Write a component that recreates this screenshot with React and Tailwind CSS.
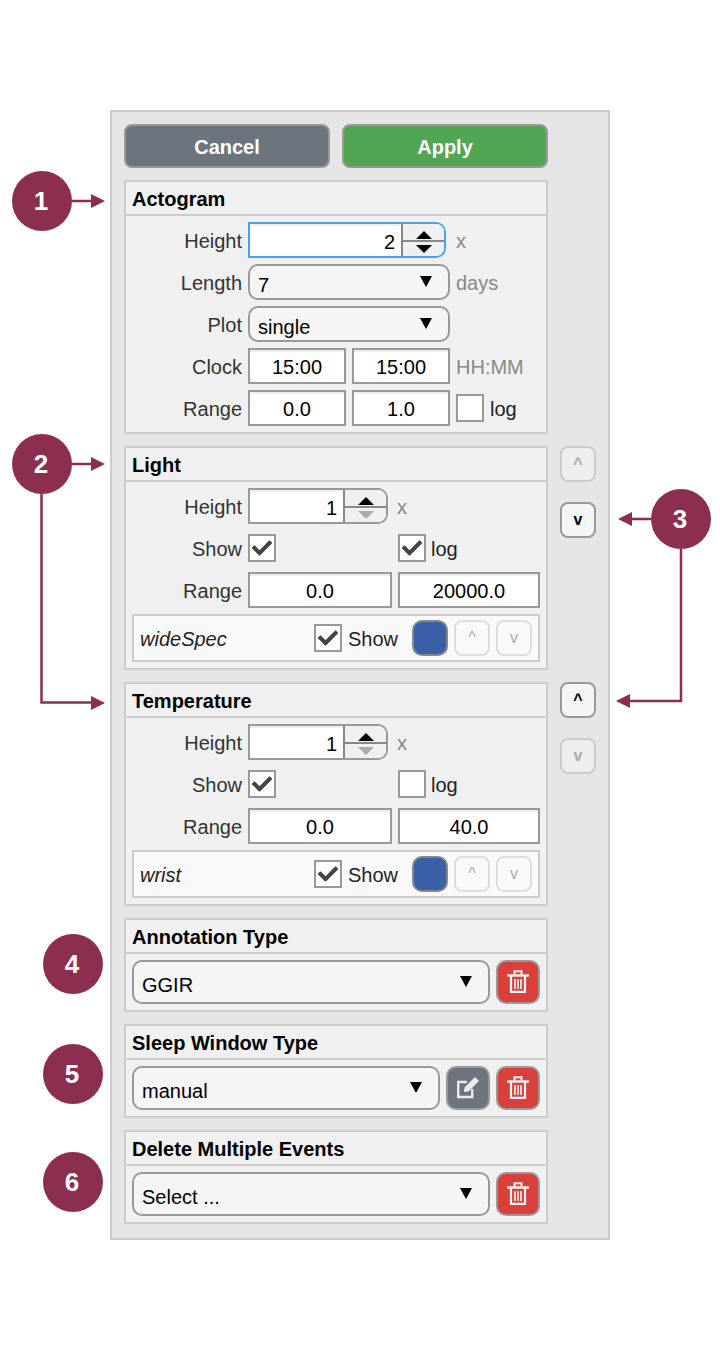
import React from 'react';
import { FaCheck } from 'react-icons/fa';

const Triangle = ({ dir = 'down', className = '' }) => (
  <svg width="12" height="11" viewBox="0 0 12 11" preserveAspectRatio="none" className={className} fill="currentColor">
    <path d={dir === 'down' ? 'M0 0H12L6 11Z' : 'M0 11H12L6 0Z'} />
  </svg>
);

const TrashIcon = () => (
  <svg width="24" height="24" viewBox="0 0 24 24" fill="none" stroke="#f6f6f6">
    <path d="M8.5 4.5V1.2H15.5V4.5" strokeWidth="2" />
    <path d="M1 5.5H23" strokeWidth="2.4" />
    <path d="M5 6V21.8H19V6" strokeWidth="2.2" />
    <path d="M9 9V19M12 9V19M15 9V19" strokeWidth="1.6" />
  </svg>
);

const EditIcon = () => (
  <svg width="24" height="24" viewBox="0 0 24 24" fill="none" stroke="#e8eaeb">
    <path d="M11 6H2.2V21H16.2V13" strokeWidth="2.4" />
    <path d="M8.5 11.5L8 16L12.5 15.5L23 5L19 1Z" fill="#e8eaeb" stroke="none" />
  </svg>
);

const Field = ({ value, className = '' }) => (
  <input
    readOnly
    value={value}
    className={`h-9 border-2 border-[#999] bg-white pt-[2px] text-center text-[20px] text-black outline-none shadow-[inset_0_2px_0_#f0f0f0] ${className}`}
  />
);

const Select = ({ value, className = '', tall = false }) => (
  <div className={`flex items-center justify-between rounded-[10px] border-2 border-[#999] bg-[#f5f5f5] pl-2 pr-[16px] ${tall ? 'h-11' : 'h-9'} ${className}`}>
    <span className="pt-1.5 text-[20px] text-black">{value}</span>
    <Triangle className="mb-[1px] text-black" />
  </div>
);

const Spinner = ({ value, focused = false, downDisabled = false, className = '' }) => (
  <div className={`flex h-9 rounded-r-[10px] border-2 ${focused ? 'border-[#4a9ff5]' : 'border-[#999]'} ${className}`}>
    <div className="flex-1 bg-white pr-1.5 pt-[3px] text-right text-[20px] text-black shadow-[inset_0_2px_0_#f0f0f0]">{value}</div>
    <div className="flex w-[43px] flex-col border-l-2 border-[#888] bg-[#f0f0f0] rounded-r-[8px]">
      <div className="flex flex-1 items-end justify-center border-b-2 border-[#888] pb-[1px]">
        <Triangle dir="up" className="h-[8px] w-[16px] text-black" />
      </div>
      <div className="flex flex-1 items-center justify-center">
        <Triangle className={`h-[8px] w-[16px] ${downDisabled ? 'text-[#aaa]' : 'text-black'}`} />
      </div>
    </div>
  </div>
);

const Checkbox = ({ checked = false }) => (
  <div className="flex h-7 w-7 shrink-0 items-center justify-center border-2 border-[#999] bg-white">
    {checked && <FaCheck className="text-[20px] text-[#444]" />}
  </div>
);

const Text = ({ className = '', children }) => (
  <span className={`pt-[2px] text-[20px] ${className}`}>{children}</span>
);

const Row = ({ label, children }) => (
  <div className="flex h-9 items-center gap-1.5">
    <div className="w-[110px] pt-[2px] text-right text-[20px] text-[#333]">{label}</div>
    {children}
  </div>
);

const Section = ({ title, children }) => (
  <div className="w-[424px] border-2 border-[#ccc] bg-[#f0f0f0]">
    <div className="flex h-[34px] items-center border-b-2 border-[#ccc] pl-1.5 pt-[2px] text-[20px] font-bold text-black">{title}</div>
    {children}
  </div>
);

const SideButton = ({ label, enabled }) => (
  <div className={`flex h-9 w-9 items-center justify-center rounded-[8px] border-2 text-[16px] font-bold ${enabled ? 'border-[#999] bg-[#f5f5f5] text-black' : 'border-[#ccc] bg-[#eee] text-[#aaa]'}`}>
    {label}
  </div>
);

const TrackButton = ({ label }) => (
  <div className="flex h-9 w-9 items-center justify-center rounded-[8px] border-2 border-[#ddd] bg-[#f9f9f9] text-[16px] text-[#aaa]">
    {label}
  </div>
);

const IconButton = ({ color, children }) => (
  <div className={`flex h-11 w-11 shrink-0 items-center justify-center rounded-[10px] border-2 border-[#999] ${color}`}>
    {children}
  </div>
);

const Delete = () => (
  <IconButton color="bg-[#da403b]"><TrashIcon /></IconButton>
);

const TrackRows = ({ height, logChecked, max, track }) => (
  <div className="flex flex-col gap-1.5 p-1.5">
    <Row label="Height">
      <Spinner value={height} downDisabled className="w-[140px]" />
      <Text className="ml-[3px] text-[#888]">x</Text>
    </Row>
    <Row label="Show">
      <div className="w-[144px]"><Checkbox checked /></div>
      <Checkbox checked={logChecked} />
      <Text className="-ml-px text-[#222]">log</Text>
    </Row>
    <Row label="Range">
      <Field value="0.0" className="w-[144px]" />
      <Field value={max} className="w-[142px]" />
    </Row>
    <div className="flex h-12 items-center border-2 border-[#ccc] bg-[#f9f9f9] pl-1.5 pr-1.5">
      <Text className="italic text-[#222]">{track}</Text>
      <div className="ml-auto"><Checkbox checked /></div>
      <Text className="ml-1.5 w-[64px] text-[#222]">Show</Text>
      <div className="h-9 w-9 rounded-[10px] border-2 border-[#888] bg-[#3a60a8]" />
      <div className="ml-1.5"><TrackButton label="^" /></div>
      <div className="ml-1.5"><TrackButton label="v" /></div>
    </div>
  </div>
);

const Callout = ({ n, className }) => (
  <div className={`absolute flex h-[60px] w-[60px] items-center justify-center rounded-full bg-[#8b2e50] pr-[2px] text-[26px] font-bold text-white ${className}`}>
    {n}
  </div>
);

// the numbered notes and their arrows lie over the panel
const Annotations = () => (
  <>
    <svg className="absolute left-0 top-0" width="720" height="1350" viewBox="0 0 720 1350" fill="none">
      <g stroke="#8b2e50" strokeWidth="2.5">
        <path d="M72 201H92" />
        <path d="M72 464H92" />
        <path d="M41.5 494V702.5H92" />
        <path d="M651 519H630" />
        <path d="M681 549V701H628" />
      </g>
      <g fill="#8b2e50">
        <path d="M91 194L105 201L91 208Z" />
        <path d="M91 457L105 464L91 471Z" />
        <path d="M91 696L105 703L91 710Z" />
        <path d="M632 512L618 519L632 526Z" />
        <path d="M630 694L616 701L630 708Z" />
      </g>
    </svg>
    <Callout n="1" className="left-[12px] top-[171px]" />
    <Callout n="2" className="left-[12px] top-[434px]" />
    <Callout n="3" className="left-[651px] top-[489px]" />
    <Callout n="4" className="left-[43px] top-[934px]" />
    <Callout n="5" className="left-[43px] top-[1044px]" />
    <Callout n="6" className="left-[43px] top-[1152px]" />
  </>
);

const App = () => {
  return (
    <div className="relative h-[1350px] w-[720px] bg-white pl-[110px] pt-[110px] font-['Liberation_Sans',Arial,sans-serif]">
      <div className="flex w-[500px] flex-col gap-3 border-2 border-[#ccc] bg-[#e5e5e5] px-3 pb-3.5 pt-3">
        {/* Buttons */}
        <div className="flex w-[424px] gap-3">
          <div className="flex h-11 flex-1 items-center justify-center rounded-[8px] border-2 border-[#999] bg-[#6c757d] pt-[2px] text-[20px] font-bold text-white">Cancel</div>
          <div className="flex h-11 flex-1 items-center justify-center rounded-[8px] border-2 border-[#999] bg-[#52a552] pt-[2px] text-[20px] font-bold text-white">Apply</div>
        </div>

        {/* Actogram */}
        <Section title="Actogram">
          <div className="flex flex-col gap-1.5 p-1.5">
            <Row label="Height">
              <Spinner value="2" focused className="w-[198px]" />
              <Text className="ml-1 text-[#888]">x</Text>
            </Row>
            <Row label="Length">
              <Select value="7" className="w-[202px]" />
              <Text className="text-[#888]">days</Text>
            </Row>
            <Row label="Plot">
              <Select value="single" className="w-[202px]" />
            </Row>
            <Row label="Clock">
              <Field value="15:00" className="w-[98px]" />
              <Field value="15:00" className="w-[98px]" />
              <Text className="text-[#888]">HH:MM</Text>
            </Row>
            <Row label="Range">
              <Field value="0.0" className="w-[98px]" />
              <Field value="1.0" className="w-[98px]" />
              <Checkbox />
              <Text className="text-[#222]">log</Text>
            </Row>
          </div>
        </Section>

        {/* Light */}
        <div className="flex gap-3">
          <Section title="Light">
            <TrackRows height="1" logChecked max="20000.0" track="wideSpec" />
          </Section>
          <div className="flex flex-col gap-5">
            <SideButton label="^" />
            <SideButton label="v" enabled />
          </div>
        </div>

        {/* Temperature */}
        <div className="flex gap-3">
          <Section title="Temperature">
            <TrackRows height="1" max="40.0" track="wrist" />
          </Section>
          <div className="flex flex-col gap-5">
            <SideButton label="^" enabled />
            <SideButton label="v" />
          </div>
        </div>

        <Section title="Annotation Type">
          <div className="flex gap-1.5 p-1.5">
            <Select value="GGIR" tall className="flex-1" />
            <Delete />
          </div>
        </Section>

        <Section title="Sleep Window Type">
          <div className="flex gap-1.5 p-1.5">
            <Select value="manual" tall className="flex-1" />
            <IconButton color="bg-[#6c757d]"><EditIcon /></IconButton>
            <Delete />
          </div>
        </Section>

        <Section title="Delete Multiple Events">
          <div className="flex gap-1.5 p-1.5">
            <Select value="Select ..." tall className="flex-1" />
            <Delete />
          </div>
        </Section>
      </div>

      <Annotations />
    </div>
  );
};

export default App;
